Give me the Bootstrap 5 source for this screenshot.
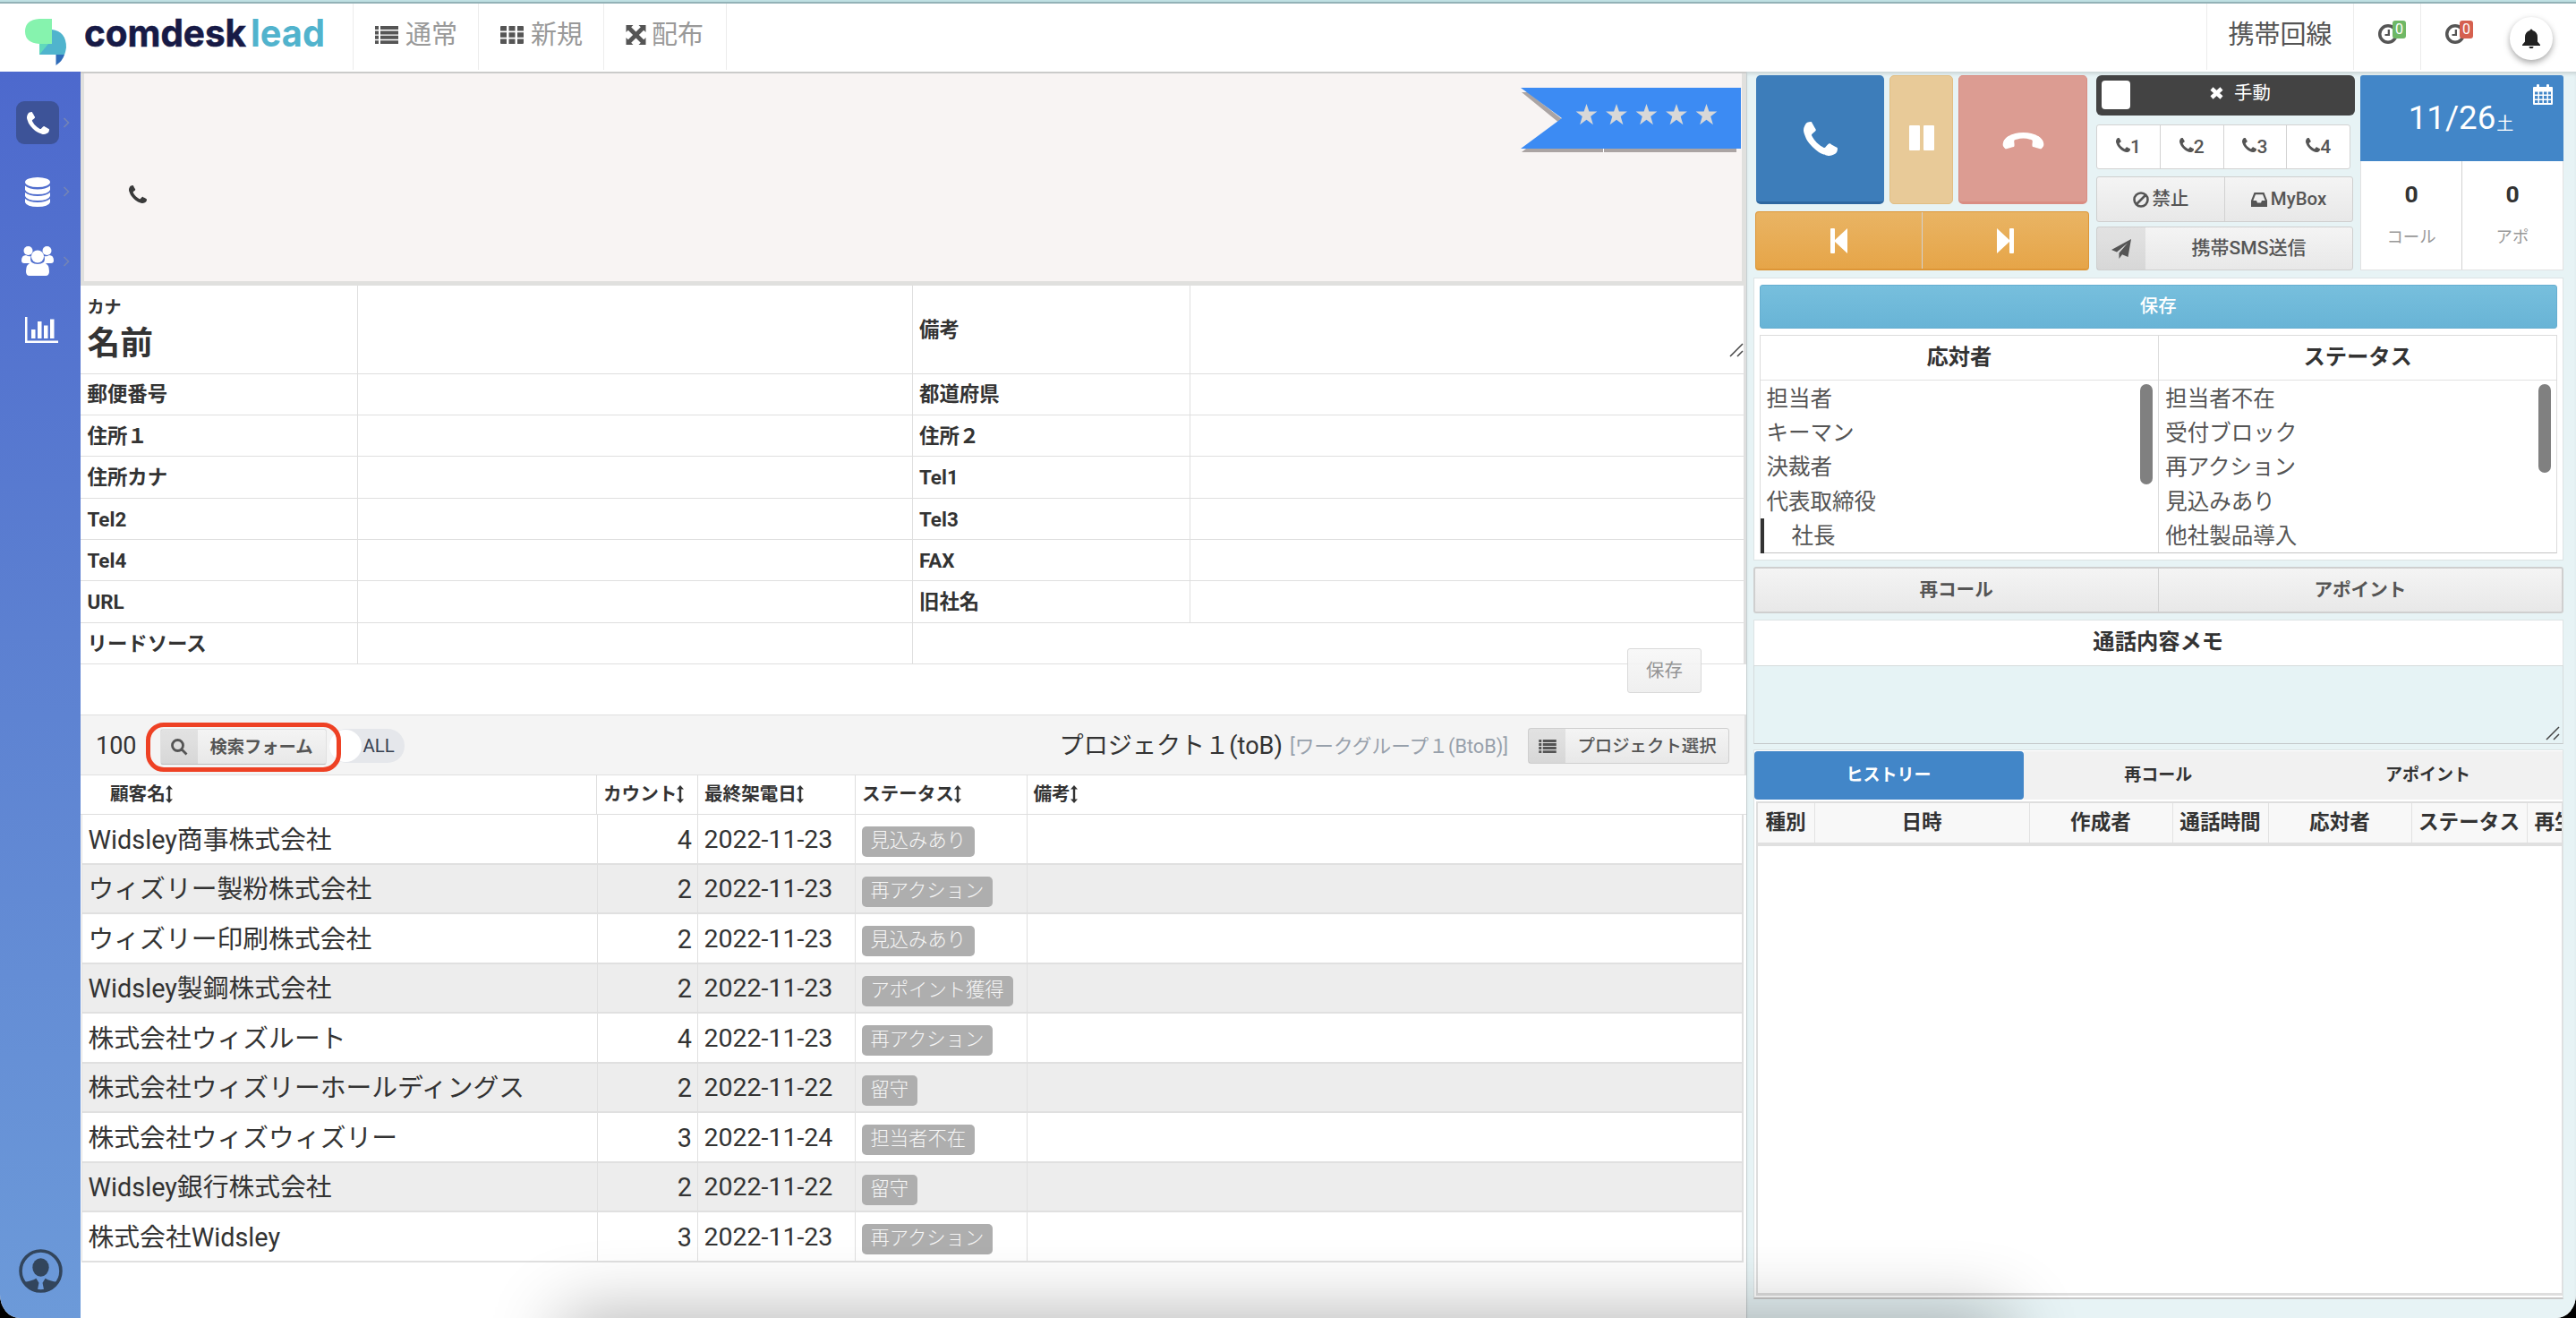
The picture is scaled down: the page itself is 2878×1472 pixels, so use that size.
<!DOCTYPE html>
<html lang="ja">
<head>
<meta charset="utf-8">
<title>comdesk lead</title>
<link href="https://cdn.jsdelivr.net/npm/bootstrap@5.3.0/dist/css/bootstrap.min.css" rel="stylesheet">
<style>
html,body{height:100%}
body{margin:0;background:#000;font-family:Roboto,"Noto Sans CJK JP",sans-serif;font-size:20.4px;line-height:1;color:#333;overflow:hidden}
svg{display:block;fill:currentColor;flex:none}
.shell{width:2878px;height:1472px;background:#fff;border-radius:0 0 22px 22px/0 0 26px 26px;overflow:hidden;position:relative}
.topbar{height:80px;border-top:2px solid #bfe0e3;background:linear-gradient(#93b2b7 0 2px,#fff 2px);position:relative;z-index:2;white-space:nowrap}
.logo-box{width:394px;padding-left:25px}
.nav-cell{height:74px;border-left:1px solid #ececec;padding:0 0 3px 24px;font-size:29px;color:#999;gap:8px;margin-top:2px}
.nav-cell>svg{color:#555;margin-bottom:2px}
.lh{color:#555!important}
.clock{position:relative;color:#555;margin:0 0 3px 2px}
.count-tag{position:absolute;left:17px;top:-3px;width:15px;height:20px;border-radius:3px;color:#fff;font-size:16px;line-height:20px;text-align:center}
.bell{width:48px;height:48px;border-radius:50%;background:#fff;box-shadow:0 3px 7px rgba(0,0,0,.35);color:#222;margin-left:1px}
.side{width:90px;background:linear-gradient(#4d69cd,#5c80d1 45%,#6c9ad9);padding-top:33px;color:#fff}
.side-item{height:48px;margin-bottom:29.3px;width:100%;padding-left:18px}
.side-ico{width:48px;height:48px;border-radius:9px}
.side-ico.on{background:#3d5398}
.chev{color:#7585b5;margin-left:4px}
.main-col{width:1861px;border-top:2px solid #cbcbca;position:relative}
.hero{height:237px;background:#f8f4f3;border:solid #e0e0de;border-width:0 5px 5px 4px;position:relative}
.hero .tel{padding:125px 0 0 50px;color:#3a3a3a}
.ribbon{position:absolute;right:1px;top:16px}
.g-contact{display:grid;grid-template-columns:310px 619.5px 310px 1fr;grid-template-rows:98.5px repeat(7,46.4px);border-right:3px solid #dfdfdf;font-weight:700;font-size:22.4px;height:423.3px}
.g-contact>div{border-bottom:1.5px solid #dfdfdf;border-right:1.5px solid #dfdfdf;padding:1px 0 0 7.5px;display:flex;align-items:center}
.g-contact>.edge{border-right:0}
.kana{font-size:19px;margin-bottom:13px}
.grab{color:#444}
.save-float{position:absolute;left:1728px;top:642px;width:83px;height:50px;border:1px solid #d9d9d9;border-radius:3px;background:linear-gradient(#f7f7f7e0,#ededede0);color:#949494;font-size:20.4px}
.tools{height:68px;margin-top:56.2px;background:#f4f4f4;border:solid #dfdfdf;border-width:1.5px 2px 1.5px 0;padding-top:2px}
.btn-g{background:linear-gradient(#f4f4f4,#e8e8e8);border:1px solid #cfcfcf;border-radius:3px;color:#555;font-weight:500;font-size:20.4px;padding:0;line-height:1}
.seg{background:rgba(0,0,0,.07);height:100%}
.ring{border:5px solid #ee4124;border-radius:20px;width:218px;height:55px;margin:2px 0 0 10px;position:relative;z-index:1}
.ring .btn-g{width:186px;height:40px;border-color:#e0e0e0;border-bottom-color:#bbb}
.pill{width:84px;height:38px;border-radius:19px;background:#e5e7eb;margin-left:-13px;color:#374151;font-size:20.4px}
.pill i{display:block;width:36px;height:36px;border-radius:50%;background:#fff;margin:0 2px 0 0}
.g-head,.g-row{display:grid;grid-template-columns:577px 113px 176px 191.5px 1fr}
.g-head{height:44px;font-weight:700;font-size:20.6px;border-bottom:1.5px solid #dfdfdf}
.g-head>div{border-right:1.5px solid #dfdfdf;padding-left:7px;display:flex;align-items:center;padding-bottom:1px}
.g-head>div:last-child{border:0}
.g-row{height:55.5px;grid-template-columns:576px 112px 176px 191.5px 1fr;border-bottom:2px solid #e0e0e0;font-size:28.8px;font-weight:400;margin-left:1px;border-left:1px solid #e0e0e0;border-right:2px solid #e0e0e0;margin-right:3px}
.g-row:nth-child(even){background:#ededed}
.g-row>div{border-right:1.5px solid #e0e0e0;display:flex;align-items:center;padding:2px 8px 0 6.5px;white-space:nowrap}
.g-row>div:last-child{border:0}
.g-row>div:nth-child(2){justify-content:flex-end;padding-right:6px}
.g-row>div:nth-child(3){font-size:28.5px}
.tag{background:#aeaeae;color:#f6f6f6;font-size:21.3px;font-weight:300;border-radius:5px;height:34px;line-height:32px;padding:0 10px;margin-top:4px}
.right-col{width:927px;background:#e7f3f5;border-left:1px solid #c6cfd1;padding:4px 14px 0 6.5px;box-shadow:inset 0 4px 4px -2px rgba(0,0,0,.15)}
.call-b{border-radius:5px;height:144px;color:#fff}
.c-call{width:143px;background:#3d7dba;border-bottom:3px solid #2e67a0;margin:0 6px 0 1px}
.c-hold{width:71px;background:#e8ca98;border:1px solid #e2be83;margin-right:6px}
.c-hang{width:144px;background:#dc9c92;border:1px solid #d98d83;border-bottom-width:3px}
.skip{height:66px;background:linear-gradient(#e9b464,#e6a548);border:1px solid #dd9637;border-bottom-width:2px;border-radius:4px;color:#fff;margin-top:8px}
.skip>div+div{border-left:1px solid #dd9637}
.manual{height:45px;background:#434343;border-radius:6px;color:#fff;position:relative;padding:0 0 5px 33px;gap:12px}
.manual b{position:absolute;left:6px;top:6px;width:32px;height:32px;border-radius:4px;background:#fff}
.lines{width:284px;height:50px;background:#fff;border:1px solid #d2d2d2;border-radius:3px;margin-top:10px;color:#555;font-weight:500;font-size:21px}
.split>div{flex:1 1 0;display:flex;align-items:center;justify-content:center}
.split>div+div{border-left:1.5px solid #d2d2d2}
.date{height:96px;background:#4286c8;color:#fff;border-radius:3px 3px 0 0;position:relative;font-size:36.7px;padding:0 0 0 22px}
.date small{font-size:19px;margin:13px 0 0 1px}
.date svg{position:absolute;right:12px;top:10px}
.stat{height:122px;background:#fff;border:1px solid #e2e2e2;border-top:0}
.stat>div{flex-direction:column}
.stat strong{font-size:26.5px;margin-top:-3px}
.stat span{font-size:18.4px;color:#999;margin-top:25px}
.box{background:#fff;border:1.5px solid #dde3e4}
.save-b{height:49px;background:linear-gradient(#77bfdd,#68b4d6);border:1px solid #66aed0;border-radius:3px;color:#fff;font-size:20.4px;font-weight:500}
.picks{margin-top:7px;height:244px;border:1.5px solid #dcdcdc;border-bottom-color:#c4c4c4}
.picks>div{width:50%;position:relative}
.picks>div+div{border-left:1.5px solid #dcdcdc}
.picks h6{margin:0 0 1px;height:50px;font-size:24.3px;line-height:1;font-weight:700;border-bottom:1.5px solid #e2e2e2;color:#333}
.picks p{margin:0;height:38.2px;line-height:40px;padding-left:7px;font-size:24.5px;color:#555}
.picks p.sub{border-left:4px solid #333;padding-left:31px;height:39px}
.bar{position:absolute;right:6px;top:54px;width:14px;border-radius:7px;background:#808080}
.two{height:52px;margin-top:7px;border-width:2px}
.memo-h{height:51px;margin-top:7px;font-size:24.3px;font-weight:700;border-bottom:0;padding-bottom:2px}
.memo{height:88px;border:1.5px solid #d5dbdc;border-bottom-color:#c4c8c9;background:#e6f3f5;padding:0 3px 3px 0}
.tabs{height:58px;margin-top:6px;font-size:19px;font-weight:700;border-bottom:0}
.tabs>div{flex:1 1 0;height:54px;background:#f1f1f1;margin:1px 0 0;padding-bottom:2px}
.tabs>.on{background:#4286c8;color:#fff;border-radius:4px}
.hist{height:556px;padding:0 0 0 2px;border-top:0;border-bottom:2px solid #c8c8c8}
.hist-in{height:552px;border:2px solid #dedede;border-right-width:1px;border-bottom-width:3px;overflow:hidden}
.hist-h{display:grid;grid-template-columns:64px 240px 160px 107px 160px 129px 70px;height:48px;background:#f8f8f8;border-bottom:4px solid #e0e0e0;font-weight:700;font-size:22.6px;white-space:nowrap}
.hist-h>div{border-right:1.5px solid #e2e2e2;display:flex;align-items:center;justify-content:center}
.dock-shade{position:absolute;left:640px;top:1480px;width:1590px;height:60px;box-shadow:0 0 80px 12px rgba(0,0,0,.3);z-index:5}
</style>
<script src="https://cdn.jsdelivr.net/npm/bootstrap@5.3.0/dist/js/bootstrap.bundle.min.js"></script>
</head>
<body>
<svg width="0" height="0" class="position-absolute">
<symbol id="phone" viewBox="0 128 1408 1408"><path d="M1408 1240q0 27-10 70.5t-21 68.5q-21 50-122 106-94 51-186 51-27 0-53-3.5t-57.5-12.5-47-14.5-55.5-20.5-49-18q-98-35-175-83-127-79-264-216t-216-264q-48-77-83-175-3-9-18-49t-20.500-55.500-14.500-47-12.500-57.500-3.500-53q0-92 51-186 56-101 106-122 25-11 68.500-21t70.500-10q14 0 21 3 18 6 53 76 11 19 30 54t35 63.500 31 53.500q3 4 17.500 25t21.500 35.500 7 28.500q0 20-28.500 50t-62 55-62 53-28.500 46q0 9 5 22.500t8.500 20.500 14 24 11.500 19q76 137 174 235t235 174q2 1 19 11.500t24 14 20.500 8.500 22.500 5q18 0 46-28.500t53-62 55-62 50-28.500q14 0 28.500 7t35.500 21.500 25 17.500q25 15 53.500 31t63.500 35 54 30q70 35 76 53 3 7 3 21z"/></symbol>
<symbol id="list" viewBox="0 0 26 20"><path d="M0 0h4v4H0zM6 0h20v4H6zM0 5.400h4v4H0zM6 5.400h20v4H6zM0 10.800h4v4H0zM6 10.800h20v4H6zM0 16.200h4v4H0zM6 16.200h20v4H6z"/></symbol>
<symbol id="sort" viewBox="0 0 8 20"><path d="M4 0l4 4.500H5.200v11H8L4 20 0 15.500h2.800v-11H0z"/></symbol>
<symbol id="clock" viewBox="0 0 24 24"><path fill-rule="evenodd" d="M12 1a11 11 0 1 0 0 22 11 11 0 0 0 0-22zm0 3.500a7.500 7.500 0 1 1 0 15 7.500 7.500 0 0 1 0-15zM11.700 7h2.300v7H8.500v-2h3.200z"/></symbol>
<symbol id="grab" viewBox="0 0 16 16"><path d="M1 15 15 1M9 15l6-6" fill="none" stroke="currentColor" stroke-width="1.500"/></symbol>
<symbol id="chev" viewBox="0 0 8 12"><path d="M1.500 1 6.500 6l-5 5" fill="none" stroke="currentColor" stroke-width="1.600"/></symbol>
</svg>
<div class="shell">
<header class="topbar d-flex">
  <div class="logo-box">
    <svg width="350" height="76" viewBox="25 2 350 76"><path d="M58 33q16 2 16 20-1 6-2 8H44V33z" fill="#50b4cd"/><path d="M62.500 61H72q-2 7-9.500 12z" fill="#2f6cb9"/><path d="M44 21h14v28H44q-16-1-16-14 0-13 16-14z" fill="#86f3ae"/><path d="M44 49h10L44 61z" fill="#60d9bb"/><g font-family="Inter" font-weight="700" font-size="42" stroke-width=".6"><text x="94" y="52" fill="#171a46" stroke="#171a46" textLength="181" lengthAdjust="spacingAndGlyphs">comdesk</text><text x="280" y="52" fill="#51b3cd" textLength="83" lengthAdjust="spacingAndGlyphs">lead</text></g></svg>
  </div>
  <div class="nav-cell d-flex align-items-center" style="width:140px"><svg width="26" height="20"><use href="#list"/></svg>通常</div>
  <div class="nav-cell d-flex align-items-center" style="width:140px"><svg width="26" height="20" viewBox="0 0 26 20"><path d="M0 1q0-1 1-1h6v5.500H0zM9.500 0h7v5.500h-7zM19 0h6q1 0 1 1v4.500h-7zM0 7.200h7v5.500H0zM9.500 7.200h7v5.500h-7zM19 7.200h7v5.500h-7zM0 14.500h7V20H1q-1 0-1-1zM9.500 14.500h7V20h-7zM19 14.500h7V19q0 1-1 1h-6z"/></svg>新規</div>
  <div class="nav-cell d-flex align-items-center" style="width:137px;gap:6px"><svg width="23" height="22" viewBox="0 0 22 22"><path d="M0 0h8L5.700 2.300 11 7.600l5.300-5.300L14 0h8v8l-2.300-2.300L14.400 11l5.300 5.300L22 14v8h-8l2.300-2.300L11 14.400l-5.300 5.300L8 22H0v-8l2.300 2.300L7.600 11 2.300 5.700 0 8z"/></svg>配布</div>
  <div class="nav-cell flex-grow-1"></div>
  <div class="nav-cell lh d-flex align-items-center" style="width:164.500px">携帯回線</div>
  <div class="nav-cell d-flex align-items-center" style="width:75px"><div class="clock"><svg width="24" height="24"><use href="#clock"/></svg><span class="count-tag" style="background:#6fb865">0</span></div></div>
  <div class="nav-cell d-flex align-items-center" style="width:99px"><div class="clock"><svg width="24" height="24"><use href="#clock"/></svg><span class="count-tag" style="background:#d5604f">0</span></div></div>
  <div class="d-flex align-items-center pt-1" style="width:75px"><div class="bell d-flex align-items-center justify-content-center"><svg width="20" height="22" viewBox="0 0 20 22"><path d="M8.500 2a1.500 1.500 0 0 1 3 0Q17 3.500 17 9.500v5l3 3.500v1H0v-1l3-3.500v-5Q3 3.500 8.500 2zM7.500 20h5a2.500 2.200 0 0 1-5 0z"/></svg></div></div>
</header>
<div class="d-flex" style="height:1392px">
<nav class="side d-flex flex-column">
  <div class="side-item d-flex align-items-center"><div class="side-ico on d-flex align-items-center justify-content-center"><svg width="25" height="25"><use href="#phone"/></svg></div><svg class="chev" width="8" height="12"><use href="#chev"/></svg></div>
  <div class="side-item d-flex align-items-center"><div class="side-ico d-flex align-items-center justify-content-center"><svg width="28" height="33" viewBox="0 0 28 33"><ellipse cx="14" cy="5.500" rx="14" ry="5.500"/><path d="M0 9.500q5 4 14 4t14-4V14q-2 5-14 5T0 14zM0 17q5 4 14 4t14-4v4q-2 5-14 5T0 21zM0 24q5 4 14 4t14-4v4q-2 5-14 5T0 28z"/></svg></div><svg class="chev" width="8" height="12"><use href="#chev"/></svg></div>
  <div class="side-item d-flex align-items-center"><div class="side-ico d-flex align-items-center justify-content-center"><svg width="36" height="33" viewBox="0 0 36 33"><circle cx="7.500" cy="5" r="5"/><circle cx="28.500" cy="5" r="5"/><path d="M5 10q3 2 5.500 1-1.500 6 2 8H3q-3 0-3-3 0-6 5-6zM31 10q-3 2-5.500 1 1.500 6-2 8H33q3 0 3-3 0-6-5-6z"/><circle cx="18" cy="11.500" r="7"/><path d="M11 18q7 4 14 0 6 2 6 10 0 5-4 5H9q-4 0-4-5 0-8 6-10z"/></svg></div><svg class="chev" width="8" height="12"><use href="#chev"/></svg></div>
  <div class="side-item d-flex align-items-center"><div class="side-ico d-flex align-items-center justify-content-center"><svg class="ms-2" width="37" height="29" viewBox="0 0 37 29"><path d="M0 0h2.500v26.500H37V29H0zM7 14h4.500v10H7zM14 5h4.500v19H14zM21 9.500h4.500V24H21zM28 2.500h4.500V24H28z"/></svg></div></div>
  <svg class="mt-auto" style="color:#32455c;margin:0 0 28px 21px" width="49" height="49" viewBox="0 0 48 48"><circle cx="24" cy="24" r="22" fill="none" stroke="currentColor" stroke-width="3.500"/><ellipse cx="24" cy="20" rx="9" ry="10"/><path d="M6 36q8-1 13-4l3 5-2 10Q11 46 6 36zM42 36q-8-1-13-4l-3 5 2 10q9-1 14-11z"/></svg>
</nav>
<main class="main-col">
  <section class="hero">
    <div class="tel"><svg width="20" height="20"><use href="#phone"/></svg></div>
    <svg class="ribbon" width="246" height="72" viewBox="0 0 246 72"><path d="M1 5 44 40l2-5L8 5zM1 72l5-4h235v4z" fill="#aba4a3"/><path d="M92 67h1v5h-1z" fill="#fff"/><path d="M0 0h246v68H0l46-34z" fill="#3c8bf3"/><g fill="#d8d8d8"><path id="st" d="M73.500 18l2.900 8.500h9l-7.200 5.400 2.700 9.300-7.400-5.500-7.400 5.500 2.700-9.300-7.200-5.400h9z"/><use href="#st" x="33.500"/><use href="#st" x="67"/><use href="#st" x="100.500"/><use href="#st" x="134"/></g></svg>
  </section>
  <section class="g-contact">
    <div class="flex-column align-items-start justify-content-center pt-2"><span class="kana">カナ</span><span style="font-size:36.700px;margin-bottom:6px">名前</span></div><div></div><div>備考</div><div class="edge justify-content-end align-items-end" style="padding-bottom:18px"><svg class="grab" width="16" height="16"><use href="#grab"/></svg></div>
    <div>郵便番号</div><div></div><div>都道府県</div><div class="edge"></div>
    <div>住所１</div><div></div><div>住所２</div><div class="edge"></div>
    <div>住所カナ</div><div></div><div>Tel1</div><div class="edge"></div>
    <div>Tel2</div><div></div><div>Tel3</div><div class="edge"></div>
    <div>Tel4</div><div></div><div>FAX</div><div class="edge"></div>
    <div>URL</div><div></div><div>旧社名</div><div class="edge"></div>
    <div>リードソース</div><div></div><div class="edge"></div><div class="edge"></div>
  </section>
  <button class="save-float d-flex align-items-center justify-content-center">保存</button>
  <section class="tools d-flex align-items-center">
    <span style="font-size:27px;margin-left:17px">100</span>
    <div class="ring d-flex align-items-center justify-content-center"><div class="btn-g d-flex align-items-center"><div class="seg d-flex align-items-center justify-content-center" style="width:41px"><svg width="19" height="19" viewBox="0 0 19 19"><path d="M7.500 1.500a6 6 0 1 1 0 12 6 6 0 0 1 0-12zM12 12l5.500 5.500" fill="none" stroke="#555" stroke-width="2.800"/></svg></div><span class="flex-grow-1 text-center fw-bold" style="font-size:19.300px">検索フォーム</span></div></div>
    <div class="pill d-flex align-items-center"><i></i>ALL</div>
    <div class="ms-auto d-flex align-items-center"><span style="font-size:27.100px">プロジェクト１(toB)</span><span style="font-size:21.700px;color:#97a0ab;margin-left:8px">[ワークグループ１(BtoB)]</span>
    <div class="btn-g d-flex align-items-center" style="width:225px;height:40px;margin:0 17px 0 22px"><div class="seg d-flex align-items-center justify-content-center" style="width:41px"><svg width="20" height="15"><use href="#list"/></svg></div><span class="flex-grow-1 text-center" style="font-size:19.400px">プロジェクト選択</span></div></div>
  </section>
  <section class="g-head">
    <div style="padding-left:33px">顧客名<svg width="8" height="20"><use href="#sort"/></svg></div><div>カウント<svg width="8" height="20"><use href="#sort"/></svg></div><div>最終架電日<svg width="8" height="20"><use href="#sort"/></svg></div><div>ステータス<svg width="8" height="20"><use href="#sort"/></svg></div><div>備考<svg width="8" height="20"><use href="#sort"/></svg></div>
  </section>
  <section>
    <div class="g-row"><div>Widsley商事株式会社</div><div>4</div><div>2022-11-23</div><div><span class="tag">見込みあり</span></div><div></div></div>
    <div class="g-row"><div>ウィズリー製粉株式会社</div><div>2</div><div>2022-11-23</div><div><span class="tag">再アクション</span></div><div></div></div>
    <div class="g-row"><div>ウィズリー印刷株式会社</div><div>2</div><div>2022-11-23</div><div><span class="tag">見込みあり</span></div><div></div></div>
    <div class="g-row"><div>Widsley製鋼株式会社</div><div>2</div><div>2022-11-23</div><div><span class="tag">アポイント獲得</span></div><div></div></div>
    <div class="g-row"><div>株式会社ウィズルート</div><div>4</div><div>2022-11-23</div><div><span class="tag">再アクション</span></div><div></div></div>
    <div class="g-row"><div>株式会社ウィズリーホールディングス</div><div>2</div><div>2022-11-22</div><div><span class="tag">留守</span></div><div></div></div>
    <div class="g-row"><div>株式会社ウィズウィズリー</div><div>3</div><div>2022-11-24</div><div><span class="tag">担当者不在</span></div><div></div></div>
    <div class="g-row"><div>Widsley銀行株式会社</div><div>2</div><div>2022-11-22</div><div><span class="tag">留守</span></div><div></div></div>
    <div class="g-row"><div>株式会社Widsley</div><div>3</div><div>2022-11-23</div><div><span class="tag">再アクション</span></div><div></div></div>
  </section>
</main>
<aside class="right-col">
  <div class="d-flex" style="height:218px;margin-left:2.500px">
    <div style="width:373px;margin-right:8px">
      <div class="d-flex">
        <div class="call-b c-call d-flex align-items-center justify-content-center"><svg width="38" height="38"><use href="#phone"/></svg></div>
        <div class="call-b c-hold d-flex align-items-center justify-content-center"><svg width="28" height="28" viewBox="0 0 28 28" class="mb-1"><rect width="12" height="28" rx="1"/><rect x="16" width="12" height="28" rx="1"/></svg></div>
        <div class="call-b c-hang d-flex align-items-center justify-content-center"><svg width="37" height="37" style="transform:translateY(5px) rotate(135deg)"><use href="#phone"/></svg></div>
      </div>
      <div class="skip d-flex split"><div><svg width="19" height="28" viewBox="0 0 19 28"><path d="M0 1q0-1 1-1h3q1 0 1 1v12L19 0v28L5 15v12q0 1-1 1H1q-1 0-1-1z"/></svg></div><div><svg width="19" height="28" viewBox="0 0 19 28"><path d="M19 1q0-1-1-1h-3q-1 0-1 1v12L0 0v28l14-13v12q0 1 1 1h3q1 0 1-1z"/></svg></div></div>
    </div>
    <div style="width:289px;margin-right:6px">
      <div class="manual d-flex align-items-center justify-content-center"><b></b><svg width="15" height="14" viewBox="0 0 15 14"><path d="M2 2l11 10M13 2 2 12" stroke="#fff" stroke-width="4.500"/></svg>手動</div>
      <div class="lines d-flex split"><div><svg width="16" height="16" class="mb-1"><use href="#phone"/></svg>1</div><div><svg width="16" height="16" class="mb-1"><use href="#phone"/></svg>2</div><div><svg width="16" height="16" class="mb-1"><use href="#phone"/></svg>3</div><div><svg width="16" height="16" class="mb-1"><use href="#phone"/></svg>4</div></div>
      <div class="btn-g d-flex split" style="height:51px;width:287px;margin-top:8px"><div><svg width="18" height="18" viewBox="0 0 18 18" class="me-1"><path d="M9 1.500a7.500 7.500 0 1 1 0 15 7.500 7.500 0 0 1 0-15zM14 4 4 14" fill="none" stroke="currentColor" stroke-width="2.600"/></svg>禁止</div><div><svg width="18" height="16" viewBox="0 0 18 16" class="me-1"><path fill-rule="evenodd" d="M3.500 0h11L18 9v7H0V9zM5 2.300 2.300 9H6l1 2.500h4L12 9h3.700L13 2.300z"/></svg>MyBox</div></div>
      <div class="btn-g d-flex align-items-center" style="height:49px;width:287px;margin-top:5px;font-size:21px"><div class="seg d-flex align-items-center justify-content-center" style="width:54px"><svg width="22" height="22" viewBox="0 0 22 22"><path d="M22 0 18.500 20 12 17.300 8.500 22v-6.500L18 4.500 6 14.500 0 12z"/></svg></div><span class="flex-grow-1 text-center">携帯SMS送信</span></div>
    </div>
    <div style="width:227px">
      <div class="date d-flex align-items-center justify-content-center pe-4">11/26<small>土</small><svg width="22" height="23" viewBox="0 0 22 23"><path fill-rule="evenodd" d="M1 3h3V1q0-1 1.500-1T7 1v2h8V1q0-1 1.500-1T18 1v2h3q1 0 1 1v18q0 1-1 1H1q-1 0-1-1V4q0-1 1-1zm1 5.500v3h3.500v-3zm5 0v3h3.500v-3zm5 0v3h3.500v-3zm5 0v3h3v-3zm-15 4.500v3.500h3.500V13zm5 0v3.500h3.500V13zm5 0v3.500h3.500V13zm5 0v3.500h3V13zM2 18v3h3.500v-3zm5 0v3h3.500v-3zm5 0v3h3.500v-3zm5 0v3h3v-3z"/></svg></div>
      <div class="stat d-flex split"><div><strong>0</strong><span>コール</span></div><div><strong>0</strong><span>アポ</span></div></div>
    </div>
  </div>
  <div class="box" style="height:316px;margin-top:8px;padding:7px 6px 6px">
    <div class="save-b d-flex align-items-center justify-content-center">保存</div>
    <div class="picks d-flex">
      <div><h6 class="d-flex align-items-center justify-content-center">応対者</h6><p>担当者</p><p>キーマン</p><p>決裁者</p><p>代表取締役</p><p class="sub">社長</p><span class="bar" style="height:112px"></span></div>
      <div><h6 class="d-flex align-items-center justify-content-center">ステータス</h6><p>担当者不在</p><p>受付ブロック</p><p>再アクション</p><p>見込みあり</p><p>他社製品導入</p><span class="bar" style="height:99px"></span></div>
    </div>
  </div>
  <div class="btn-g two d-flex split fw-bold" style="font-size:20.600px"><div>再コール</div><div>アポイント</div></div>
  <div class="box memo-h d-flex align-items-center justify-content-center">通話内容メモ</div>
  <div class="memo d-flex align-items-end justify-content-end"><svg class="grab" width="16" height="16"><use href="#grab"/></svg></div>
  <div class="box tabs d-flex"><div class="on d-flex align-items-center justify-content-center">ヒストリー</div><div class="d-flex align-items-center justify-content-center">再コール</div><div class="d-flex align-items-center justify-content-center">アポイント</div></div>
  <div class="box hist"><div class="hist-in"><div class="hist-h"><div>種別</div><div>日時</div><div>作成者</div><div>通話時間</div><div>応対者</div><div>ステータス</div><div class="justify-content-start ps-2">再生</div></div></div></div>
</aside>
</div>
<div class="dock-shade"></div>
</div>
</body>
</html>
